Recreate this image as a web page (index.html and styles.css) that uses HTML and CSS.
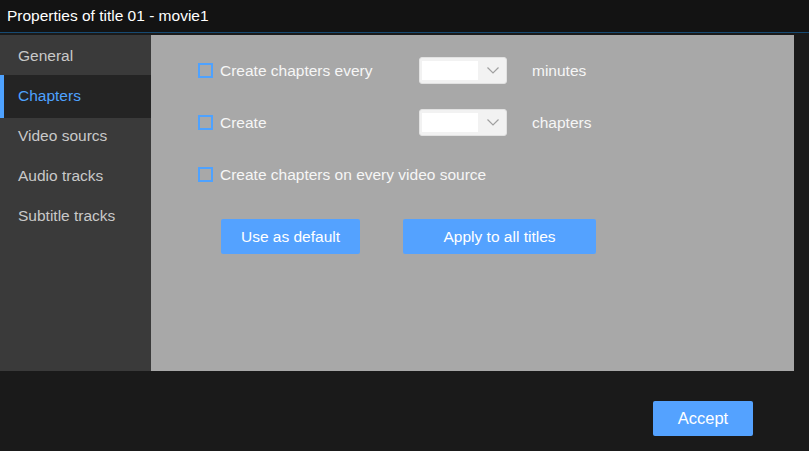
FILE: index.html
```html
<!DOCTYPE html>
<html>
<head>
<meta charset="utf-8">
<title>Properties</title>
<link rel="stylesheet" href="styles.css">
</head>
<body>
<div class="window">
  <header class="titlebar">Properties of title 01 - movie1</header>
  <div class="main">
    <nav class="sidebar">
      <div class="nav-item">General</div>
      <div class="nav-item active">Chapters</div>
      <div class="nav-item">Video sourcs</div>
      <div class="nav-item">Audio tracks</div>
      <div class="nav-item">Subtitle tracks</div>
    </nav>
    <section class="content">
      <div class="row">
        <label class="check"><span class="box"></span>Create chapters every</label>
        <div class="select"><span class="field"></span><svg class="chev" width="12" height="7" viewBox="0 0 12 7"><path d="M0.5 0.5 L6 6 L11.5 0.5" fill="none" stroke="#a0a0a0" stroke-width="1.2"/></svg></div>
        <span class="unit">minutes</span>
      </div>
      <div class="row">
        <label class="check"><span class="box"></span>Create</label>
        <div class="select"><span class="field"></span><svg class="chev" width="12" height="7" viewBox="0 0 12 7"><path d="M0.5 0.5 L6 6 L11.5 0.5" fill="none" stroke="#a0a0a0" stroke-width="1.2"/></svg></div>
        <span class="unit">chapters</span>
      </div>
      <div class="row">
        <label class="check wide"><span class="box"></span>Create chapters on every video source</label>
      </div>
      <div class="buttons">
        <button class="btn btn-default">Use as default</button>
        <button class="btn btn-apply">Apply to all titles</button>
      </div>
    </section>
  </div>
  <footer class="footer">
    <button class="btn btn-accept">Accept</button>
  </footer>
</div>
</body>
</html>
```
FILE: styles.css
```css
* { box-sizing: border-box; }
html, body {
  margin: 0;
  padding: 0;
  background: #1a1a1a;
  font-family: "Liberation Sans", Arial, sans-serif;
}
.window {
  width: 809px;
  height: 451px;
  display: flex;
  flex-direction: column;
  background: #1a1a1a;
}
.titlebar {
  height: 33px;
  background: #131313;
  border-bottom: 1px solid #174a72;
  color: #ffffff;
  font-size: 15.5px;
  line-height: 31px;
  padding-left: 7px;
}
.main {
  margin-top: 2px;
  height: 336px;
  display: flex;
  padding-right: 15px;
}
.sidebar {
  width: 151px;
  background: #3a3a3a;
  display: flex;
  flex-direction: column;
}
.nav-item {
  height: 40px;
  line-height: 41px;
  padding-left: 18px;
  color: #c9c9c9;
  font-size: 15.5px;
}
.nav-item.active {
  background: #242424;
  color: #4ea2ff;
  box-shadow: inset 4px 0 0 #4ea2ff;
  height: 43px;
  margin-bottom: -3px;
  position: relative;
}
.content {
  flex: 1;
  background: #a8a8a8;
  padding: 22px 0 0 47px;
}
.row {
  display: flex;
  align-items: center;
  height: 27px;
  margin-bottom: 25px;
}
.check {
  display: flex;
  align-items: center;
  width: 221px;
  color: #f6f6f6;
  font-size: 15.5px;
}
.check.wide { width: auto; }
.box {
  width: 15px;
  height: 15px;
  border: 2px solid #4ea2ff;
  margin-right: 7px;
  flex: none;
}
.select {
  width: 88px;
  height: 27px;
  background: #f2f2f2;
  border: 1px solid #e2e2e2;
  border-radius: 3px;
  display: flex;
  align-items: center;
  padding-left: 2px;
}
.field {
  width: 56px;
  height: 19px;
  background: #ffffff;
}
.chev {
  margin-left: 9px;
}
.unit {
  margin-left: 25px;
  color: #f6f6f6;
  font-size: 15.5px;
}
.buttons {
  display: flex;
  margin-top: 31px;
  padding-left: 23px;
  gap: 43px;
}
.btn {
  border: none;
  background: #54a2ff;
  color: #ffffff;
  font-family: "Liberation Sans", Arial, sans-serif;
  font-size: 15.5px;
  border-radius: 2px;
  height: 35px;
  padding: 0;
  cursor: pointer;
}
.btn-default { width: 139px; }
.btn-apply { width: 193px; }
.footer {
  flex: 1;
  display: flex;
  justify-content: flex-end;
  align-items: flex-start;
  padding: 30px 56px 0 0;
}
.btn-accept {
  width: 100px;
  font-size: 16.5px;
}
```
